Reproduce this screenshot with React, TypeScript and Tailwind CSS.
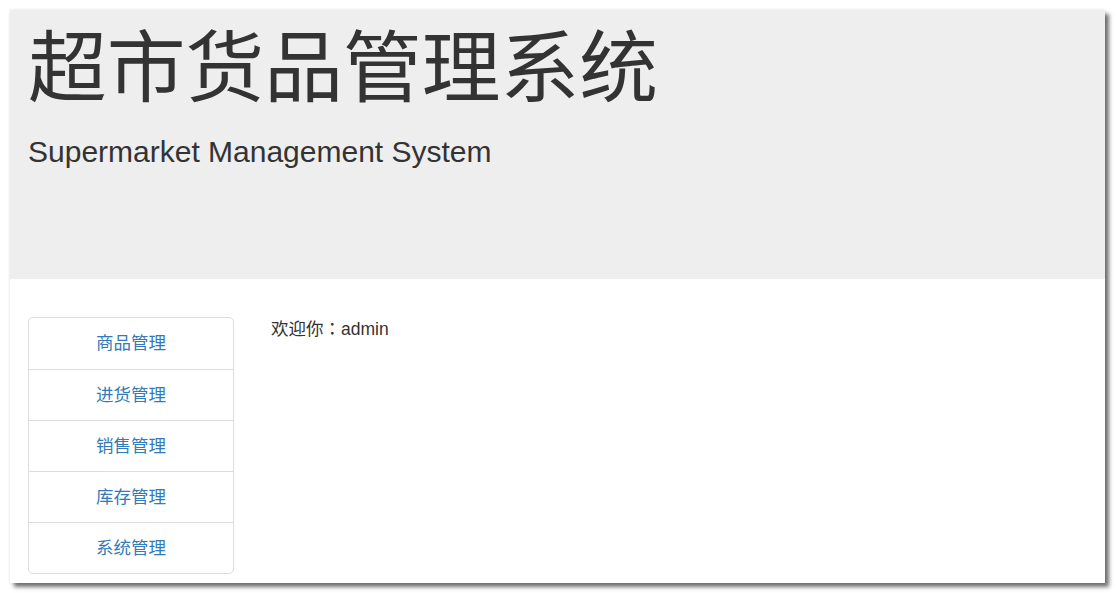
import React from "react";

const items = ["商品管理", "进货管理", "销售管理", "库存管理", "系统管理"];

export default function App() {
  return (
    <div
      className="w-[1116px] h-[593px] bg-white pt-[10px] pl-[10px]"
      style={{ fontFamily: '"Liberation Sans", "Noto Sans CJK SC", sans-serif' }}
    >
      <div className="w-[1095px] h-[573px] bg-white flex flex-col shadow-[4px_4px_4px_rgba(0,0,0,0.55),0_0_3px_rgba(0,0,0,0.12)]">
        <div className="h-[269px] bg-[#eeeeee] pl-[18px] pt-[16px] text-[#333333] flex flex-col">
          <div className="text-[78.75px] leading-[86px]">超市货品管理系统</div>
          <div className="mt-[22px] text-[30px] leading-[36px]">Supermarket Management System</div>
        </div>
        <div className="flex items-start pt-[38px] pl-[18px]">
          <div className="w-[206px] border border-[#dddddd] rounded-[5px] flex flex-col">
            {items.map((t, i) => (
              <div
                key={t}
                className={
                  "h-[51px] flex items-center justify-center text-[17.5px] text-[#337ab7] " +
                  (i > 0 ? "border-t border-[#dddddd]" : "")
                }
              >
                {t}
              </div>
            ))}
          </div>
          <div className="ml-[37px] text-[17.5px] leading-[25px] text-[#333333]">
            欢迎你<span className="leading-[20px]" style={{ fontFamily: '"Noto Sans CJK TC", sans-serif' }}>：</span>admin
          </div>
        </div>
      </div>
    </div>
  );
}
